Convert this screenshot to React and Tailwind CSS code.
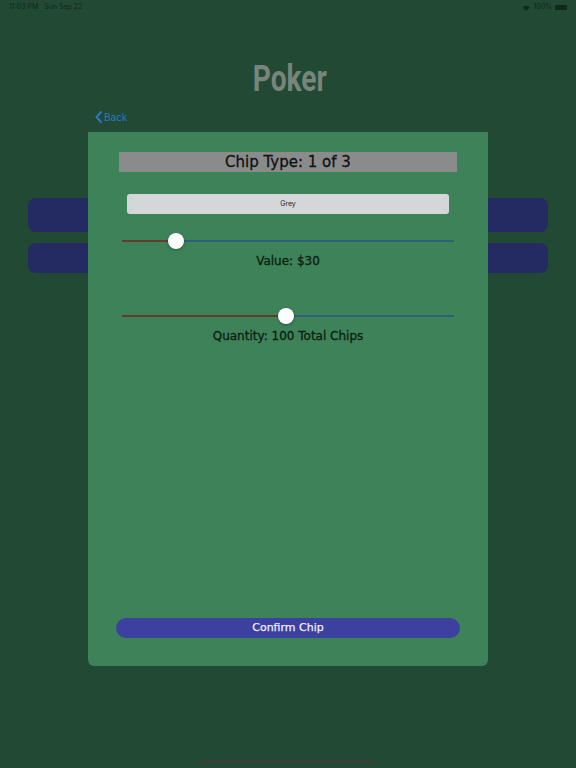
import React from "react";

function Slider({ pct }) {
  return (
    <div className="relative h-[16px] mx-[34px]">
      <div className="absolute left-0 right-0 top-[7px] h-[2px] bg-[#2f5f7a]" />
      <div className="absolute left-0 top-[7px] h-[2px] bg-[#663a2e]" style={{ width: `${pct}%` }} />
      <div
        className="absolute top-0 w-[16px] h-[16px] -ml-[8px] rounded-full bg-white shadow-[0_1px_3px_rgba(0,0,0,0.3)]"
        style={{ left: `${pct}%` }}
      />
    </div>
  );
}

export default function App() {
  const din = { fontFamily: '"DejaVu Sans", "Roboto", sans-serif' };
  return (
    <div className="w-[576px] h-[768px] bg-[#214934] relative overflow-hidden" style={{ fontFamily: '"Inter", "Liberation Sans", sans-serif' }}>
      {/* status bar */}
      <div className="flex justify-between items-center h-[14px] px-[9px] pt-[1px] text-[7px] text-[#0f2a1b]">
        <div className="flex gap-[6px]"><span>11:03 PM</span><span>Sun Sep 22</span></div>
        <div className="flex items-center gap-[3px]">
          <svg width="8" height="6" viewBox="0 0 8 6"><path d="M4 6 L0.5 2.2 A5 5 0 0 1 7.5 2.2 Z" fill="#0f2a1b" /></svg>
          <span>100%</span>
          <div className="w-[12px] h-[5px] rounded-[1px] bg-[#0f2a1b]" />
        </div>
      </div>
      {/* title */}
      <div className="text-center mt-[45px] leading-[40px] h-[40px]">
        <span className="inline-block text-[37px] font-bold text-[#77857c] scale-x-[0.76] translate-x-[2px]" style={{ fontFamily: '"Roboto", "Liberation Sans", sans-serif' }}>Poker</span>
      </div>
      {/* back */}
      <div className="flex items-center gap-[2px] ml-[95px] mt-[12px] h-[12px] text-[10px] text-[#2d78b8]">
        <svg width="7" height="12" viewBox="0 0 7 12"><path d="M6 1 L1.5 6 L6 11" fill="none" stroke="#2d78b8" strokeWidth="2" strokeLinecap="round" strokeLinejoin="round" /></svg>
        <span>Back</span>
      </div>
      {/* background buttons */}
      <div className="absolute left-[28px] right-[28px] top-[198px] flex flex-col gap-[11px]">
        <div className="h-[34px] rounded-[8px] bg-[#242a62]" />
        <div className="h-[30px] rounded-[8px] bg-[#242a62]" />
      </div>
      {/* modal card */}
      <div className="absolute left-[88px] top-[132px] w-[400px] h-[534px] bg-[#3d8259] rounded-b-[6px] flex flex-col">
        <div className="mx-[31px] mt-[20px] h-[20px] bg-[#8a8c8b] flex items-center justify-center text-[15px] text-[#111] leading-none [-webkit-text-stroke:0.3px_#111]" style={din}>Chip Type: 1 of 3</div>
        <div className="mx-[39px] mt-[22px] h-[20px] rounded-[3px] bg-[#d4d7d9] flex items-center justify-center text-[7px] text-[#222]">Grey</div>
        <div className="mt-[19px]"><Slider pct={16.2} /></div>
        <div className="text-center text-[12px] text-[#0c1d12] mt-[5px] leading-[14px] [-webkit-text-stroke:0.3px_#0c1d12]" style={din}>Value: $30</div>
        <div className="mt-[40px]"><Slider pct={49.4} /></div>
        <div className="text-center text-[12px] text-[#0c1d12] mt-[5px] leading-[14px] [-webkit-text-stroke:0.3px_#0c1d12]" style={din}>Quantity: 100 Total Chips</div>
        <div className="flex-1" />
        <div className="mx-[28px] mb-[28px] h-[20px] rounded-full bg-[#3c41a0] flex items-center justify-center text-[11px] text-[#eef] [-webkit-text-stroke:0.25px_#eef]" style={din}>Confirm Chip</div>
      </div>
      {/* home indicator */}
      <div className="absolute left-[200px] w-[176px] top-[760px] h-[3px] rounded-full bg-[#3a3d38]" />
    </div>
  );
}
